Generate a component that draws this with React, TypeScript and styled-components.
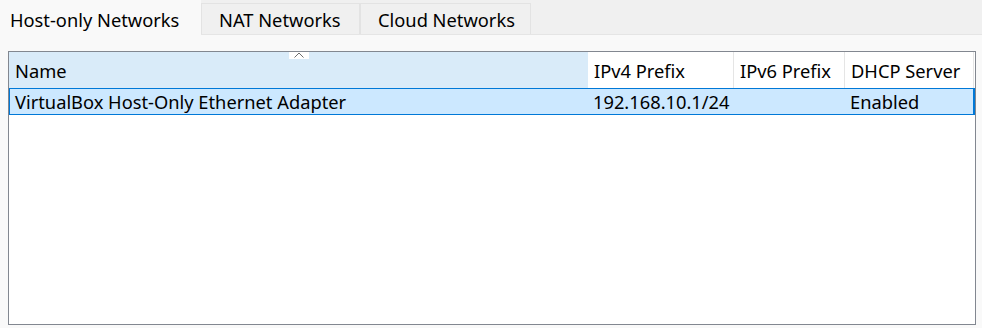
import styled, { createGlobalStyle } from 'styled-components';

const GlobalStyle = createGlobalStyle`
  html, body {
    margin: 0;
    padding: 0;
    background: #f9f9f9;
  }
  body {
    font-family: "Noto Sans", "Open Sans", "Liberation Sans", sans-serif;
    font-size: 18.3px;
    color: #000;
  }
`;

const Page = styled.div`
  width: 982px;
  height: 328px;
  display: flex;
  flex-direction: column;
  overflow: hidden;
`;

const TabBar = styled.div`
  height: 34px;
  display: flex;
  align-items: flex-end;
  background: #f0f0f0;
  border-bottom: 1px solid #e5e5e5;
`;

const Tab = styled.div<{ $active?: boolean; $width: number }>`
  box-sizing: border-box;
  width: ${(p) => p.$width}px;
  height: ${(p) => (p.$active ? 35 : 31)}px;
  margin-bottom: ${(p) => (p.$active ? -1 : 0)}px;
  display: flex;
  align-items: center;
  padding-left: ${(p) => (p.$active ? 10 : 17)}px;
  padding-top: ${(p) => (p.$active ? 2 : 0)}px;
  background: ${(p) => (p.$active ? '#f9f9f9' : '#f0f0f0')};
  border: 1px solid ${(p) => (p.$active ? '#f9f9f9' : '#e3e3e3')};
  border-bottom: none;
  border-left: ${(p) => (p.$active ? 'none' : '1px solid #e3e3e3')};
  white-space: nowrap;
`;

const Content = styled.div`
  padding: 16px 6px 3px 8px;
  flex: 1;
  display: flex;
`;

const ListView = styled.div`
  box-sizing: border-box;
  width: 968px;
  height: 274px;
  background: #fff;
  border: 1px solid #828790;
  display: flex;
  flex-direction: column;
`;

const HeaderRow = styled.div`
  display: flex;
  height: 36px;
`;

const HeaderCell = styled.div<{ $w: number; $sorted?: boolean }>`
  position: relative;
  box-sizing: border-box;
  width: ${(p) => p.$w}px;
  flex: none;
  display: flex;
  align-items: center;
  padding: 1px 0 0 6px;
  background: ${(p) => (p.$sorted ? '#d9ebf9' : '#fff')};
  border-right: 1px solid ${(p) => (p.$sorted ? '#d9ebf9' : '#e5e5e5')};
  white-space: nowrap;
`;

const SortMark = styled.div`
  position: absolute;
  left: 280px;
  top: 0;
  width: 20px;
  height: 7px;
  background: #fff;
  display: flex;
  justify-content: center;
  align-items: flex-start;
`;

const DataRow = styled.div`
  box-sizing: border-box;
  display: flex;
  height: 27px;
  background: #cce8ff;
  border: 1px solid #0078d7;
  border-right-width: 2px;
`;

const DataCell = styled.div<{ $w: number }>`
  box-sizing: border-box;
  width: ${(p) => p.$w}px;
  flex: none;
  display: flex;
  align-items: center;
  padding-left: 5px;
  white-space: nowrap;
`;

const columns = [
  { title: 'Name', w: 579, sorted: true },
  { title: 'IPv4 Prefix', w: 146 },
  { title: 'IPv6 Prefix', w: 111 },
  { title: 'DHCP Server', w: 129 },
];

const row = ['VirtualBox Host-Only Ethernet Adapter', '192.168.10.1/24', '', 'Enabled'];

export default function App() {
  return (
    <Page>
      <GlobalStyle />
      <TabBar>
        <Tab $active $width={201}>Host-only Networks</Tab>
        <Tab $width={159}>NAT Networks</Tab>
        <Tab $width={171}>Cloud Networks</Tab>
      </TabBar>
      <Content>
        <ListView>
          <HeaderRow>
            {columns.map((c) => (
              <HeaderCell key={c.title} $w={c.w} $sorted={c.sorted}>
                {c.title}
                {c.sorted && (
                  <SortMark>
                    <svg width="10" height="6" viewBox="0 0 10 6">
                      <path d="M0.5 5.5 L5 1 L9.5 5.5" fill="none" stroke="#6d6d6d" strokeWidth="1" />
                    </svg>
                  </SortMark>
                )}
              </HeaderCell>
            ))}
          </HeaderRow>
          <DataRow>
            {row.map((v, i) => (
              <DataCell key={i} $w={columns[i].w - (i === 0 ? 1 : 0)}>
                {v}
              </DataCell>
            ))}
          </DataRow>
        </ListView>
      </Content>
    </Page>
  );
}
